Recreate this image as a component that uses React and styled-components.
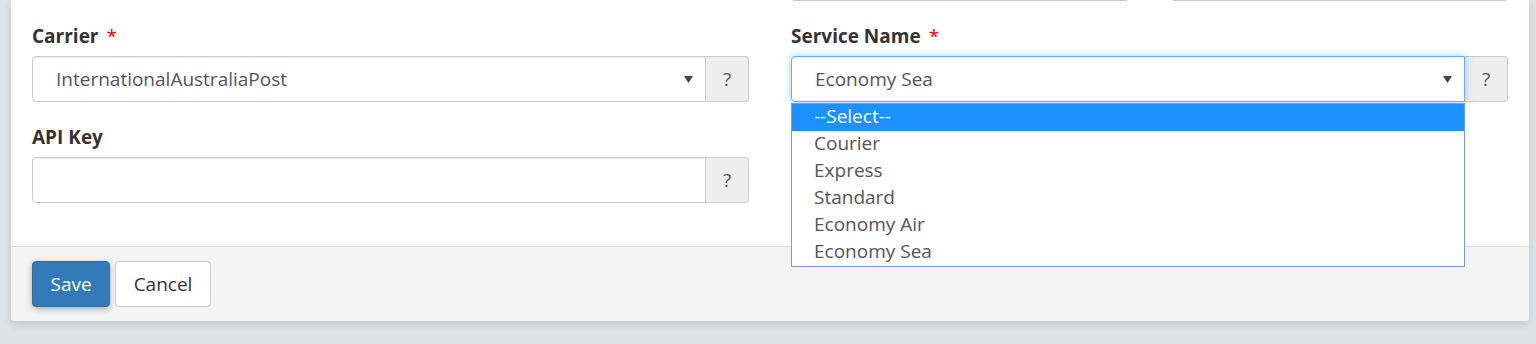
import React from "react";
import styled, { createGlobalStyle } from "styled-components";

const Global = createGlobalStyle`
  html, body { margin: 0; padding: 0; background: #dfe3e6; }
  body { font-family: "Open Sans", "Liberation Sans", sans-serif; color: #333; }
  * { box-sizing: border-box; }
`;

const Page = styled.div`
  padding: 0 7px 23px 11px;
  height: 344px;
  overflow: hidden;
`;

const Card = styled.div`
  background: #fff;
  border-radius: 0 0 4px 4px;
  box-shadow: 0 3px 10px rgba(0, 0, 0, 0.13);
`;

const Body = styled.div`
  display: grid;
  grid-template-columns: 1fr 1fr;
  padding-bottom: 43px;
`;

const Cell = styled.div`
  padding: 0 21px;
`;

const StubRow = styled.div`
  display: grid;
  grid-template-columns: 1fr 1fr;
  gap: 42px;
`;

const Stub = styled.div`
  height: 1px;
  margin: 0 2px;
  background: #c6c6c6;
`;

const Group = styled.div`
  margin-top: ${(p) => p.$top}px;
`;

const Label = styled.label`
  display: block;
  font-size: 19px;
  font-weight: 700;
  line-height: 26px;
  margin-bottom: 7px;
  color: #333;
`;

const Req = styled.span`
  color: #e00;
  font-weight: 400;
  margin-left: 8px;
`;

const InputGroup = styled.div`
  display: flex;
  height: 46px;
`;

const FieldWrap = styled.div`
  position: relative;
  flex: 1;
  display: flex;
`;

const Field = styled.div`
  flex: 1;
  display: flex;
  align-items: center;
  justify-content: space-between;
  padding: 0 12px 0 23px;
  font-size: 19px;
  color: #555;
  background: #fff;
  border: 1px solid ${(p) => (p.$focus ? "#66afe9" : "#ccc")};
  border-radius: 4px 0 0 4px;
  box-shadow: ${(p) =>
    p.$focus
      ? "inset 0 1px 1px rgba(0,0,0,.075), 0 0 8px rgba(102,175,233,.6)"
      : "inset 0 1px 1px rgba(0,0,0,.075)"};
  position: relative;
  z-index: ${(p) => (p.$focus ? 2 : 0)};
`;

const Addon = styled.div`
  width: 43px;
  display: flex;
  align-items: center;
  justify-content: center;
  font-size: 19px;
  color: #555;
  background: #eee;
  border: 1px solid #ccc;
  border-left: 0;
  border-radius: 0 4px 4px 0;
`;

const Menu = styled.ul`
  position: absolute;
  left: 0;
  right: 0;
  top: calc(100% + 1px);
  margin: 0;
  padding: 0;
  list-style: none;
  background: #fff;
  border: 1px solid #7b9bd0;
  z-index: 5;
`;

const Option = styled.li`
  height: 27px;
  line-height: 25px;
  padding-left: 22px;
  font-size: 19px;
  color: ${(p) => (p.$active ? "#fff" : "#555")};
  background: ${(p) => (p.$active ? "#1e90ff" : "transparent")};
`;

const Footer = styled.div`
  display: flex;
  gap: 5px;
  padding: 14px 21px;
  background: #f4f4f4;
  border-top: 1px solid #ddd;
  border-radius: 0 0 4px 4px;
`;

const Button = styled.button`
  height: 46px;
  padding: 0 17.5px;
  font-family: inherit;
  font-size: 19px;
  border-radius: 4px;
  border: 1px solid ${(p) => (p.$primary ? "#2e6da4" : "#ccc")};
  background: ${(p) => (p.$primary ? "#337ab7" : "#fff")};
  color: ${(p) => (p.$primary ? "#fff" : "#333")};
  box-shadow: ${(p) => (p.$primary ? "0 2px 6px rgba(0,0,0,0.3)" : "none")};
`;

const Caret = () => (
  <svg width="9" height="7" viewBox="0 0 9 7">
    <polygon points="0,0 9,0 4.5,7" fill="#444" />
  </svg>
);

const options = ["--Select--", "Courier", "Express", "Standard", "Economy Air", "Economy Sea"];

export default function App() {
  return (
    <>
      <Global />
      <Page>
        <Card>
          <Body>
            <Cell />
            <Cell>
              <StubRow>
                <Stub />
                <Stub />
              </StubRow>
            </Cell>
            <Cell>
              <Group $top={22}>
                <Label>
                  Carrier<Req>*</Req>
                </Label>
                <InputGroup>
                  <FieldWrap>
                    <Field>
                      InternationalAustraliaPost
                      <Caret />
                    </Field>
                  </FieldWrap>
                  <Addon>?</Addon>
                </InputGroup>
              </Group>
            </Cell>
            <Cell>
              <Group $top={22}>
                <Label>
                  Service Name<Req>*</Req>
                </Label>
                <InputGroup>
                  <FieldWrap>
                    <Field $focus>
                      Economy Sea
                      <Caret />
                    </Field>
                    <Menu>
                      {options.map((o, i) => (
                        <Option key={o} $active={i === 0}>
                          {o}
                        </Option>
                      ))}
                    </Menu>
                  </FieldWrap>
                  <Addon>?</Addon>
                </InputGroup>
              </Group>
            </Cell>
            <Cell>
              <Group $top={22}>
                <Label>API Key</Label>
                <InputGroup>
                  <FieldWrap>
                    <Field />
                  </FieldWrap>
                  <Addon>?</Addon>
                </InputGroup>
              </Group>
            </Cell>
            <Cell />
          </Body>
          <Footer>
            <Button $primary>Save</Button>
            <Button>Cancel</Button>
          </Footer>
        </Card>
      </Page>
    </>
  );
}
